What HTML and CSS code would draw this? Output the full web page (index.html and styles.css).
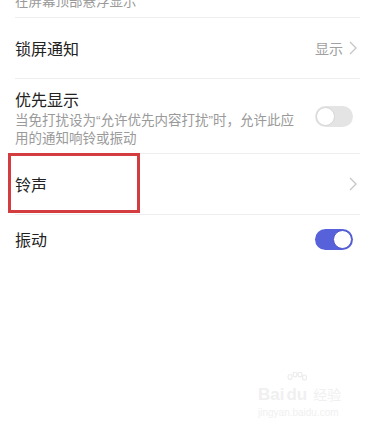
FILE: index.html
```html
<!DOCTYPE html>
<html lang="zh-CN">
<head>
<meta charset="utf-8">
<title>通知设置</title>
<link rel="stylesheet" href="styles.css">
</head>
<body>
<div class="page">
  <div class="list">
    <div class="top-row"><span class="sub">在屏幕顶部悬浮显示</span></div>
    <div class="row row-60">
      <span class="title">锁屏通知</span>
      <span class="right"><span class="value">显示</span><svg class="chev" width="8" height="14" viewBox="0 0 8 14"><path d="M1 1 L7 7 L1 13" fill="none" stroke="#c6c6c6" stroke-width="1.3"/></svg></span>
    </div>
    <div class="row row-multi">
      <div class="texts">
        <div class="title">优先显示</div>
        <div class="sub desc">当免打扰设为<span class="q">“</span>允许优先内容打扰<span class="q">”</span>时，允许此应用的通知响铃或振动</div>
      </div>
      <span class="switch off"><span class="knob"></span></span>
    </div>
    <div class="row row-60 marked">
      <span class="title">铃声</span>
      <span class="right"><svg class="chev" width="8" height="14" viewBox="0 0 8 14"><path d="M1 1 L7 7 L1 13" fill="none" stroke="#c6c6c6" stroke-width="1.3"/></svg></span>
      <span class="mark"></span>
    </div>
    <div class="row row-last">
      <span class="title">振动</span>
      <span class="switch on"><span class="knob"></span></span>
    </div>
  </div>
  <div class="watermark">
    <svg class="paw" width="22" height="14" viewBox="0 0 22 14">
      <g fill="none" stroke="#ececec" stroke-width="1.2">
        <ellipse cx="4" cy="5" rx="2" ry="2.5"/>
        <ellipse cx="9" cy="2.5" rx="2" ry="2.3"/>
        <ellipse cx="14" cy="2.5" rx="2" ry="2.3"/>
        <ellipse cx="18.5" cy="5.5" rx="2" ry="2.5"/>
      </g>
    </svg>
    <div class="wm-main"><span class="wm-bai">Bai</span><span class="wm-du">du</span><span class="wm-jy">经验</span></div>
    <div class="wm-url">jingyan.baidu.com</div>
  </div>
</div>
</body>
</html>
```
FILE: styles.css
```css
html, body {
  margin: 0;
  padding: 0;
  background: #ffffff;
}
body {
  font-family: "Noto Sans CJK SC", "Noto Sans", sans-serif;
  color: #222222;
  overflow: hidden;
}
.page {
  position: relative;
  width: 375px;
  height: 427px;
  overflow: hidden;
}
.list {
  padding: 0 15px;
}
.top-row {
  height: 18px;
  box-sizing: border-box;
  padding-bottom: 9px;
  display: flex;
  flex-direction: column;
  justify-content: flex-end;
  overflow: hidden;
  border-bottom: 1px solid #eeeeee;
}
.sub {
  font-size: 13.5px;
  line-height: 16px;
  color: #9a9a9a;
}
.q {
  font-family: "Liberation Sans", sans-serif;
}
.row {
  display: flex;
  align-items: center;
  justify-content: space-between;
  border-bottom: 1px solid #eeeeee;
  box-sizing: border-box;
}
.row-60 {
  height: 61px;
}
.row-multi {
  height: 75px;
  padding-top: 1px;
}
.row-last {
  height: 48px;
  border-bottom: none;
}
.title {
  font-size: 16px;
  line-height: 20px;
  color: #222222;
}
.texts {
  width: 290px;
}
.desc {
  margin-top: 2px;
}
.right {
  display: flex;
  align-items: center;
  margin-right: 3px;
}
.value {
  font-size: 14px;
  line-height: 20px;
  color: #a0a0a0;
  margin-right: 6px;
}
.chev {
  display: block;
}
.switch {
  width: 38px;
  height: 21px;
  border-radius: 11px;
  box-sizing: border-box;
  margin-right: 7px;
  display: flex;
  align-items: center;
  padding: 1px;
  flex-shrink: 0;
}
.switch.off {
  background: #e4e4e4;
  justify-content: flex-start;
}
.switch.on {
  background: #5661da;
  justify-content: flex-end;
}
.knob {
  width: 19px;
  height: 19px;
  border-radius: 50%;
  background: #ffffff;
  box-sizing: border-box;
}
.switch.off .knob {
  border: 1px solid #d6d6d6;
}
.switch.on .knob {
  border: 1px solid #4d57cc;
}
.marked {
  position: relative;
}
.mark {
  position: absolute;
  left: -7px;
  top: -1px;
  width: 132px;
  height: 60px;
  border: 3px solid #d43d3f;
  box-sizing: border-box;
}
.watermark {
  position: absolute;
  left: 258px;
  top: 372px;
  width: 92px;
  color: #f0f0f0;
  font-family: "Liberation Sans", sans-serif;
}
.paw {
  display: block;
  margin-left: 28px;
}
.wm-main {
  display: flex;
  align-items: baseline;
  font-size: 17px;
  line-height: 16px;
  font-weight: bold;
}
.wm-du {
  margin-left: 2px;
}
.wm-jy {
  font-family: "Noto Sans CJK SC", sans-serif;
  font-size: 14px;
  margin-left: 6px;
  font-weight: normal;
}
.wm-url {
  font-size: 10px;
  line-height: 14px;
  margin-top: 3px;
}
```
